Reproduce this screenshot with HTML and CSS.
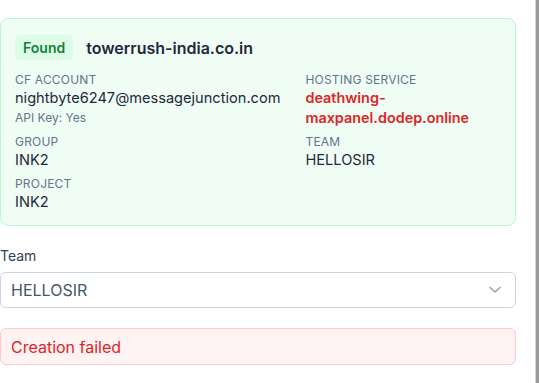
FILE: index.html
```html
<!DOCTYPE html>
<html lang="en">
<head>
<meta charset="utf-8">
<link rel="stylesheet" href="styles.css">
</head>
<body>
<div class="page">
  <main class="panel">
    <section class="card">
      <div class="card-head">
        <span class="badge">Found</span>
        <span class="domain">towerrush-india.co.in</span>
      </div>
      <div class="grid">
        <div class="field">
          <div class="label">CF Account</div>
          <div class="value">nightbyte6247@messagejunction.com</div>
          <div class="sub">API Key: Yes</div>
        </div>
        <div class="field">
          <div class="label">Hosting Service</div>
          <div class="value danger">deathwing-maxpanel.dodep.online</div>
        </div>
        <div class="field">
          <div class="label">Group</div>
          <div class="value">INK2</div>
        </div>
        <div class="field">
          <div class="label">Team</div>
          <div class="value">HELLOSIR</div>
        </div>
        <div class="field">
          <div class="label">Project</div>
          <div class="value">INK2</div>
        </div>
      </div>
    </section>

    <label class="form-label">Team</label>
    <div class="select">
      <span>HELLOSIR</span>
      <svg class="chev" width="16" height="16" viewBox="0 0 16 16" fill="none" stroke="currentColor" stroke-width="1.6" stroke-linecap="round" stroke-linejoin="round"><path d="M3 5.5l5 4.5 5-4.5"/></svg>
    </div>

    <div class="error">Creation failed</div>
  </main>
  <div class="edge"></div>
</div>
</body>
</html>
```

FILE: styles.css
```css
* { box-sizing: border-box; }
html, body { margin: 0; padding: 0; background: #fff; }
body {
  font-family: Inter, "Noto Sans", sans-serif;
  color: #1e293b;
  width: 539px;
  height: 383px;
  overflow: hidden;
}
.page {
  display: flex;
  height: 383px;
}
.panel {
  width: 516px;
  padding-top: 18px;
  display: flex;
  flex-direction: column;
}
.edge {
  margin-left: auto;
  width: 4px;
  height: 100%;
  border-left: 1px solid #d6d6d6;
  background: #9a9a9a;
}
.card {
  background: #f0fdf4;
  border: 1px solid #bbf7d0;
  border-radius: 8px;
  padding: 16px 14px 13px;
}
.card-head {
  display: flex;
  align-items: center;
  gap: 13px;
  margin-bottom: 12px;
}
.badge {
  background: #dcfce7;
  color: #15803d;
  font-weight: 600;
  font-size: 14px;
  line-height: 25px;
  padding: 0 8px;
  border-radius: 5px;
}
.domain {
  font-size: 16px;
  font-weight: 600;
  color: #1e293b;
}
.grid {
  display: grid;
  grid-template-columns: max-content 1fr;
  column-gap: 25px;
  row-gap: 6px;
}
.label {
  font-size: 12px;
  line-height: 16px;
  color: #64748b;
  text-transform: uppercase;
  letter-spacing: 0.2px;
}
.value {
  font-size: 14.6px;
  line-height: 20px;
  color: #1e293b;
}
.value.danger {
  color: #dc2626;
  font-weight: 600;
  font-size: 14.4px;
}
.sub {
  font-size: 12px;
  line-height: 16px;
  color: #64748b;
  margin-top: 2px;
}
.form-label {
  margin-top: 20px;
  font-size: 14px;
  line-height: 20px;
  color: #334155;
}
.select {
  margin-top: 6px;
  height: 36px;
  border: 1px solid #cbd5e1;
  border-radius: 6px;
  background: #fff;
  display: flex;
  align-items: center;
  justify-content: space-between;
  padding: 0 12px 0 10px;
  font-size: 16px;
  color: #475569;
}
.chev { color: #94a3b8; }
.error {
  margin-top: 20px;
  height: 37px;
  border: 1px solid #fecaca;
  border-radius: 6px;
  background: #fef2f2;
  color: #dc2626;
  font-size: 16px;
  display: flex;
  align-items: center;
  padding: 0 10px;
}
```
